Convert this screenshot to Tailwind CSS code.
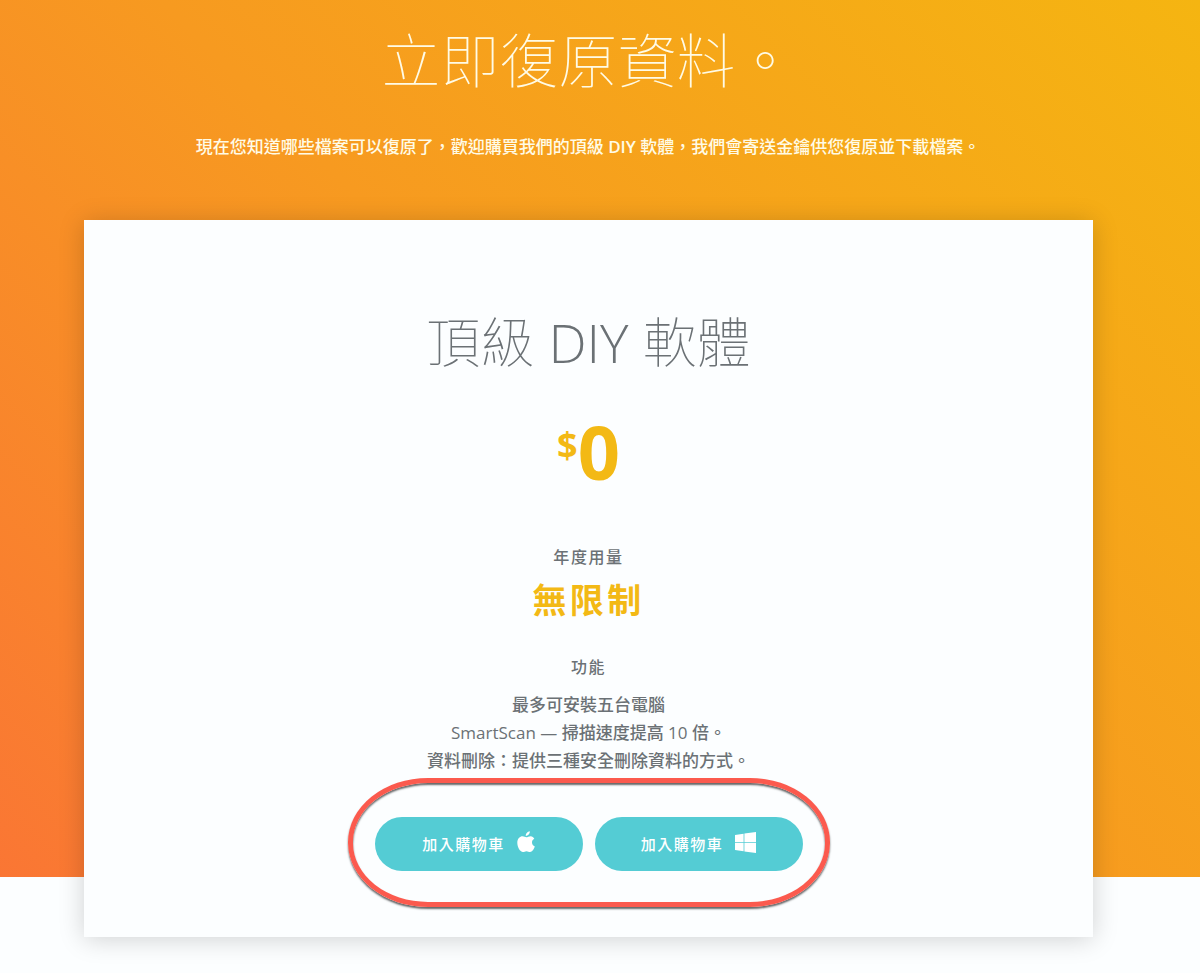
<!DOCTYPE html>
<html lang="zh-Hant">
	<head>
		<meta charset="UTF-8" />
		<meta name="viewport" content="width=device-width, initial-scale=1" />
		<title>立即復原資料</title>
		<script src="https://cdn.jsdelivr.net/npm/@tailwindcss/browser@4"></script>
	</head>
	<body class="bg-[#fcfeff] font-['Open_Sans','Noto_Sans_CJK_TC',sans-serif] text-[#6b7175]">
		<div class="mb-24 flex flex-col bg-[linear-gradient(45deg,#fa7634_0%,#f79a20_50%,#f5b511_100%)]">
			<header class="pt-5 pr-6 text-center text-[#fffbe6]">
				<h1 class="text-[59px] leading-[80px] font-thin">立即復原資料。</h1>
				<p class="mt-[35px] text-[17px] leading-6 font-medium">現在您知道哪些檔案可以復原了，歡迎購買我們的頂級 <span class="font-semibold">DIY</span> 軟體，我們會寄送金鑰供您復原並下載檔案。</p>
			</header>
			<!-- The card hangs below the gradient -->
			<main class="mt-[61px] mr-[107px] -mb-[60px] ml-[84px] bg-[#fcfeff] pt-20 pb-[30px] text-center shadow-[0_2px_24px_rgba(0,0,0,0.18)]">
				<h2 class="text-[54px] leading-[84px] font-thin">頂級 <span class="font-light">DIY</span> 軟體</h2>
				<p class="mt-[23px] flex justify-center font-bold text-[#f3b915]">
					<span class="mt-[18px] text-4xl">$</span>
					<span class="text-[74px] leading-[90px]">0</span>
				</p>
				<h3 class="mt-12 text-base leading-6 font-medium tracking-widest">年度用量</h3>
				<p class="text-[34px] leading-[62px] font-bold tracking-widest text-[#f3b915]">無限制</p>
				<h3 class="mt-6 text-base leading-6 font-medium tracking-widest">功能</h3>
				<ul class="mt-3 text-[17px] leading-7 font-medium">
					<li>最多可安裝五台電腦</li>
					<li>SmartScan — 掃描速度提高 10 倍。</li>
					<li>資料刪除：提供三種安全刪除資料的方式。</li>
				</ul>
				<div class="mx-auto mt-[3px] flex w-fit gap-3 rounded-[80px/64px] border-[5px] border-[#fb5a4e] px-[22px] pt-[34px] pb-[31px] shadow-[0_2px_2px_rgba(0,0,0,0.6),inset_0_2px_2px_rgba(0,0,0,0.6)]">
					<button type="button" class="flex h-[54px] w-52 items-center justify-center gap-3 rounded-full bg-[#54ccd4] text-[15px] font-medium tracking-widest text-white">
						加入購物車
						<svg class="mb-1 h-[22px] w-[18px]" viewBox="0 0 18 22" fill="currentColor" aria-hidden="true">
							<path d="M12.8 0.3c0.2 2.4-1.8 4.7-4 4.7C8.500 2.800 10.500 0.600 12.800 0.300zM17.300 7.700c-1.500 0.900-2.300 2.100-2.300 3.800 0 1.900 1.200 3.300 2.800 4-0.900 2.700-2.700 5.500-4.700 5.500-1.400 0-2-0.800-3.600-0.800s-2.200 0.800-3.500 0.800C3 21 0.300 16 0.300 11.800c0-4.300 2.700-6.500 5.200-6.500 1.600 0 2.900 1 3.900 1 0.900 0 2.500-1.100 4.300-1.100 1.500 0 2.800 0.900 3.600 2.500z" />
						</svg>
					</button>
					<button type="button" class="flex h-[54px] w-52 items-center justify-center gap-3 rounded-full bg-[#54ccd4] text-[15px] font-medium tracking-widest text-white">
						加入購物車
						<svg class="mb-1 h-[21px] w-[21px]" viewBox="0 0 21 21" fill="currentColor" aria-hidden="true">
							<path d="M0 3l8.600-1.300V10H0zM9.400 1.600L21 0v10H9.400zM0 10.800h8.600v8.500L0 18zM9.400 10.800H21V21L9.400 19.400z" />
						</svg>
					</button>
				</div>
			</main>
		</div>
	</body>
</html>
